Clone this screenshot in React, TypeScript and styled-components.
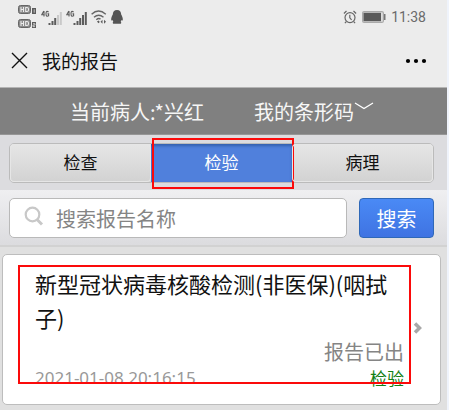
import React, { useState } from "react";
import styled, { createGlobalStyle } from "styled-components";

const GlobalStyle = createGlobalStyle`
  * { box-sizing: border-box; }
  body {
    margin: 0;
    background: #eff3fb;
    font-family: "Noto Sans CJK SC", sans-serif;
  }
  button, input { font-family: inherit; }
`;

const Screen = styled.div`
  margin-right: 2px;
  min-height: 100vh;
  background: #e0e0e0;
  display: flex;
  flex-direction: column;
`;

const StatusBar = styled.header`
  display: flex;
  align-items: center;
  justify-content: space-between;
  height: 34px;
  padding: 0 21px 0 18px;
  background: #ececec;
  color: #5c5c5c;
`;

const StatusGroup = styled.div<{ $gap: number }>`
  display: flex;
  align-items: center;
  gap: ${(p) => p.$gap}px;
`;

const Clock = styled.time`
  font-family: Roboto, sans-serif;
  font-size: 14px;
  color: #6a6a6a;
`;

const TitleBar = styled.nav`
  display: flex;
  align-items: center;
  height: 54px;
  padding: 0 20px 0 11px;
  background: #ececec;
  border-bottom: 1px solid #b4b4b4;
`;

const IconButton = styled.button`
  display: flex;
  padding: 0;
  border: 0;
  background: none;
  cursor: pointer;
`;

const PageTitle = styled.h1`
  flex: 1;
  margin: 0 0 0 14px;
  font-size: 19px;
  line-height: 28px;
  font-weight: 400;
  color: #111;
`;

const PatientBar = styled.section`
  display: flex;
  align-items: center;
  justify-content: center;
  gap: 50px;
  height: 47px;
  padding: 2px 3px 0 0;
  background: #808080;
  border-bottom: 1px solid #969696;
  color: #f6f6f6;
  font-size: 20px;
  line-height: 30px;
`;

const BarcodeButton = styled.button`
  display: flex;
  align-items: center;
  padding: 0;
  border: 0;
  background: none;
  color: inherit;
  font-size: 20px;
  line-height: 30px;
  cursor: pointer;
  svg { margin-bottom: 12px; }
`;

const TabArea = styled.div`
  padding: 8px 13px 7px 9px;
  background: #dcdcdf;
`;

const TabList = styled.div`
  display: grid;
  grid-template-columns: repeat(3, 1fr);
  height: 40px;
  border: 1px solid #bbb;
  border-radius: 5px;
  background: linear-gradient(#e6e6e6, #d2d2d2);
`;

const Tab = styled.button<{ $active: boolean }>`
  padding: 0 0 2px;
  border: 0;
  border-radius: ${(p) => (p.$active ? "0" : "4px")};
  background: ${(p) => (p.$active ? "#5080dc" : "none")};
  box-shadow: ${(p) =>
    p.$active ? "inset 0 2px 3px #345fae" : "inset 0 0 0 1px #e6e6e6"};
  color: ${(p) => (p.$active ? "#fff" : "#111")};
  font-size: 17px;
  line-height: 26px;
  cursor: pointer;
`;

const TabSlot = styled.div`
  position: relative;
  display: grid;
`;

const Highlight = styled.span<{ $inset: string }>`
  position: absolute;
  inset: ${(p) => p.$inset};
  border: 2px solid #fb0a0a;
  pointer-events: none;
`;

const SearchForm = styled.form`
  display: flex;
  gap: 12px;
  padding: 8px 13px 7px 9px;
  background: linear-gradient(#efeff1, #dcdcdf);
  border-bottom: 2px solid #d2d2d2;
`;

const SearchField = styled.label`
  flex: 1;
  min-width: 0;
  display: flex;
  align-items: center;
  gap: 12px;
  height: 40px;
  padding: 0 8px 0 14px;
  border: 1px solid #b9b9b9;
  border-radius: 5px;
  background: #fff;
  svg { margin-bottom: 3px; }
`;

const SearchInput = styled.input`
  flex: 1;
  min-width: 0;
  height: 30px;
  padding: 0;
  border: 0;
  outline: 0;
  background: none;
  font-size: 20px;
  color: #222;
  &::placeholder { color: #858585; opacity: 1; }
`;

const SearchButton = styled.button`
  width: 75px;
  height: 40px;
  padding: 2px 0 0;
  border: 1px solid #2f68b8;
  border-radius: 4px;
  background: linear-gradient(#4a8af5, #3f73e2);
  color: #fff;
  font-size: 20px;
  line-height: 30px;
  cursor: pointer;
`;

const List = styled.main`
  padding: 7px 6px 5px 2px;
`;

const Card = styled.article`
  position: relative;
  display: flex;
  align-items: center;
  padding: 11px 17px 14px 32px;
  border: 1px solid #bdbdbd;
  border-radius: 5px;
  background: #fff;
`;

const CardBody = styled.div`
  flex: 1;
  min-width: 0;
  padding-right: 9px;
`;

const ReportName = styled.h2`
  margin: 0 0 4px;
  font-size: 22px;
  line-height: 34px;
  font-weight: 400;
  color: #111;
`;

const ReportState = styled.p`
  margin: 0;
  text-align: right;
  font-size: 20px;
  line-height: 28px;
  color: #858585;
`;

const Meta = styled.div`
  display: flex;
  justify-content: space-between;
  font-size: 17px;
  line-height: 24px;
`;

const DateText = styled.time`
  font-family: "Noto Sans", sans-serif;
  color: #999;
`;

const Kind = styled.span`
  color: #128012;
`;

const HdIcon = () => (
  <svg width="19" height="24" viewBox="0 0 19 24" aria-hidden="true">
    {[0, 14].map((y) => (
      <g key={y} fill="none" transform={`translate(0 ${y})`}>
        <rect x="0.5" y="0.5" width="12" height="8" rx="2" fill="#8a8a8a" stroke="#666" />
        <path d="M3 2v5M5.5 2v5M3 4.5h2.5M7.7 2.5h1.3q1.5 0 1.5 1.5v1q0 1.5-1.5 1.5H7.7z" stroke="#ececec" strokeWidth="1.1" />
        <rect x="14" y="3" width="4" height="6" fill="#5c5c5c" />
        <path d={y ? "M15 4.7h2v1.4h-2v1.5h2" : "M16.2 4.3v3.4"} stroke="#ddd" strokeWidth="0.8" />
      </g>
    ))}
  </svg>
);

const SignalIcon = ({ full }: { full: boolean }) => (
  <svg width="21" height="15" viewBox="0 0 21 15" aria-hidden="true">
    <path
      d="M2.8 1L.7 4.8h3M3 1v5.5M7.6 2Q5 .2 5 3.7T7.6 5.8V3.9H6.5"
      fill="none"
      stroke="#5c5c5c"
      strokeWidth="1.1"
    />
    <path d="M7.5 13h2v2h-2zM10.5 11h2v4h-2zM13.2 8h2v7h-2z" fill="#5c5c5c" />
    <path d="M16 5h2v10h-2zM18.8 2h2v13h-2z" fill={full ? "#5c5c5c" : "#c9c9c9"} />
  </svg>
);

const WifiIcon = () => (
  <svg width="16" height="14" viewBox="0 0 16 14" aria-hidden="true">
    <g fill="none" stroke="#666" strokeWidth="1.4">
      <path d="M.6 4.2Q7.5-2.2 14.8 4.2M3 7.2q4.7-4 9.5 0M5.3 9.7q2.4-2 4.2-.6" />
    </g>
    <path d="M6 11.5l1.6-1 1.2 1.4-1.4 1.4zM9.5 11.7l2-2v4zM15 11.7l-2-2v4z" fill="#5c5c5c" />
  </svg>
);

const PenguinIcon = () => (
  <svg width="12" height="14" viewBox="0 0 12 14" aria-hidden="true">
    <path
      d="M6 0C3.2 0 1.8 2 1.8 4.6.8 6.4 0 8.2.2 10c.1.8.7.6 1.3.1.2.8.5 1.2.8 1.6-1.1.8-.6 2.1.9 2.1h5.6c1.5 0 2-1.3.9-2.1.3-.4.6-.8.8-1.6.6.5 1.2.7 1.3-.1.2-1.8-.6-3.6-1.6-5.4C10.2 2 8.8 0 6 0z"
      fill="#555"
    />
  </svg>
);

const AlarmIcon = () => (
  <svg width="14" height="14" viewBox="0 0 14 14" fill="none" stroke="#666" strokeWidth="1.2" aria-hidden="true">
    <circle cx="7" cy="7.6" r="5" />
    <path d="M6.8 4.8v3l1.8 2M.9 3.5L3.5 1M13.1 3.5L10.5 1M3.3 11.6l-1.4 1.6M10.7 11.6l1.4 1.6" />
  </svg>
);

const BatteryIcon = () => (
  <svg width="24" height="12" viewBox="0 0 24 12" aria-hidden="true">
    <rect x="0.6" y="0.6" width="20.8" height="10.8" rx="1.5" fill="#ddd" stroke="#aaa" strokeWidth="1.2" />
    <rect x="1.5" y="1.8" width="17.5" height="8.4" fill="#595959" />
    <path d="M22.7 3v6" stroke="#777" strokeWidth="1.6" />
  </svg>
);

const TABS = ["检查", "检验", "病理"];

export default function App() {
  const [active, setActive] = useState("检验");
  const [query, setQuery] = useState("");

  return (
    <>
      <GlobalStyle />
      <Screen>
        <StatusBar>
          <StatusGroup $gap={4}>
            <HdIcon />
            <SignalIcon full={false} />
            <SignalIcon full />
            <WifiIcon />
            <PenguinIcon />
          </StatusGroup>
          <StatusGroup $gap={5}>
            <AlarmIcon />
            <BatteryIcon />
            <Clock>11:38</Clock>
          </StatusGroup>
        </StatusBar>

        <TitleBar>
          <IconButton type="button" aria-label="关闭">
            <svg width="17" height="17" viewBox="0 0 17 17" stroke="#111" strokeWidth="1.4">
              <path d="M1 1l15 15M16 1L1 16" />
            </svg>
          </IconButton>
          <PageTitle>我的报告</PageTitle>
          <IconButton type="button" aria-label="更多">
            <svg width="22" height="6" viewBox="0 0 22 6" fill="#000">
              <circle cx="3" cy="3" r="2.1" />
              <circle cx="11" cy="3" r="2.1" />
              <circle cx="19" cy="3" r="2.1" />
            </svg>
          </IconButton>
        </TitleBar>

        <PatientBar>
          <span>当前病人:*兴红</span>
          <BarcodeButton type="button">
            我的条形码
            <svg width="20" height="8" viewBox="0 0 20 8" fill="none" stroke="#fff" strokeWidth="1.3" aria-hidden="true">
              <path d="M1 1l9 5.5L19 1" />
            </svg>
          </BarcodeButton>
        </PatientBar>

        <TabArea>
          <TabList role="tablist">
            {TABS.map((name) => (
              <TabSlot key={name} role="presentation">
                <Tab
                  type="button"
                  role="tab"
                  aria-selected={name === active}
                  $active={name === active}
                  onClick={() => setActive(name)}
                >
                  {name}
                </Tab>
                {name === "检验" && <Highlight $inset="-6px -2px -7px 1px" />}
              </TabSlot>
            ))}
          </TabList>
        </TabArea>

        <SearchForm onSubmit={(e) => e.preventDefault()}>
          <SearchField>
            <svg width="20" height="21" viewBox="0 0 20 21" fill="none" stroke="#c8c8c8" aria-hidden="true">
              <circle cx="8.5" cy="8.5" r="6.8" strokeWidth="2.2" />
              <path d="M13 13.5l5 5" strokeWidth="3" />
            </svg>
            <SearchInput
              aria-label="搜索报告名称"
              placeholder="搜索报告名称"
              value={query}
              onChange={(e) => setQuery(e.target.value)}
            />
          </SearchField>
          <SearchButton type="submit">搜索</SearchButton>
        </SearchForm>

        <List>
          <Card>
            <CardBody>
              <ReportName>新型冠状病毒核酸检测(非医保)(咽拭子)</ReportName>
              <ReportState>报告已出</ReportState>
              <Meta>
                <DateText dateTime="2021-01-08T20:16:15">2021-01-08 20:16:15</DateText>
                <Kind>检验</Kind>
              </Meta>
            </CardBody>
            <svg width="10" height="12" viewBox="0 0 10 12" fill="none" stroke="#a8a8a8" strokeWidth="3.5" aria-hidden="true">
              <path d="M2 1.5L6.5 6 2 10.5" />
            </svg>
            <Highlight $inset="10px 29px 20px 15px" />
          </Card>
        </List>
      </Screen>
    </>
  );
}
